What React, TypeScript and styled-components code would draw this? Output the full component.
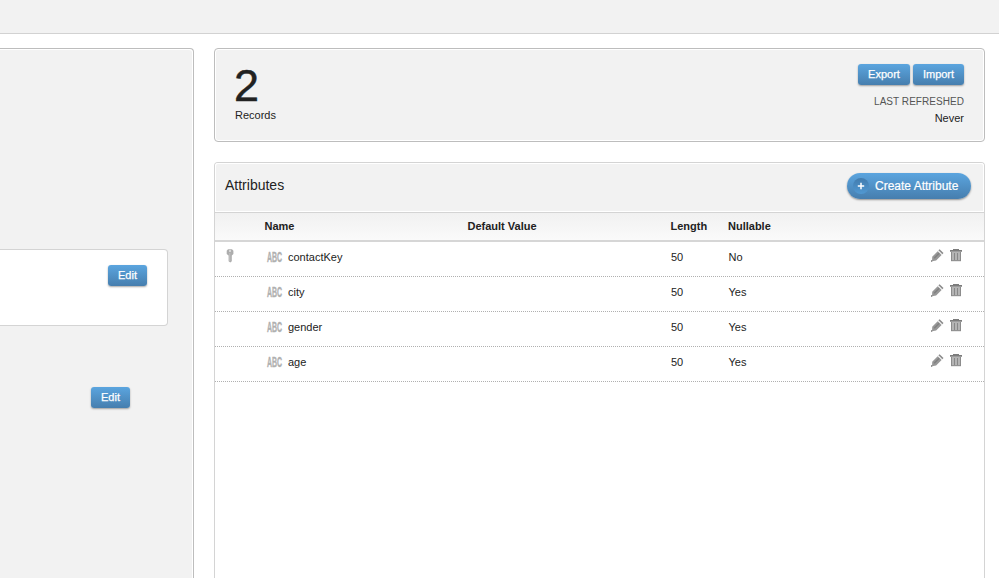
import React from "react";
import styled, { createGlobalStyle } from "styled-components";

const GlobalStyle = createGlobalStyle`
  * { box-sizing: border-box; }
  body {
    margin: 0;
    background: #fff;
    color: #222;
    font-family: "Liberation Sans", Arial, sans-serif;
    font-size: 11px;
    overflow: hidden;
  }
`;

const Page = styled.div`
  height: 578px;
  display: flex;
  flex-direction: column;
  overflow: hidden;
`;

const TopBar = styled.header`
  flex: none;
  height: 34px;
  background: #f2f2f2;
  border-bottom: 1px solid #d2d2d2;
`;

const Columns = styled.div`
  flex: 1;
  display: flex;
  gap: 20px;
  padding: 14px 14px 0 0;
  min-height: 0;
`;

const Sidebar = styled.aside`
  width: 194px;
  background: #f2f2f2;
  border: 1px solid #bdbdbd;
  border-width: 1px 1px 0 0;
  border-top-right-radius: 4px;
  box-shadow: inset -1px 1px 0 #fff;
  padding-top: 200px;
`;

const SideCard = styled.section`
  width: 168px;
  height: 77px;
  display: flex;
  justify-content: flex-end;
  align-items: flex-start;
  padding: 15px 20px 0 0;
  background: #fff;
  border: 1px solid #d4d4d4;
  border-left: 0;
  border-radius: 0 4px 4px 0;
`;

const SideAction = styled.div`
  width: 130px;
  display: flex;
  justify-content: flex-end;
  padding-top: 61px;
`;

const Button = styled.button<{ $width: number }>`
  width: ${(p) => p.$width}px;
  height: 21px;
  padding: 0 0 1px;
  border: 0;
  border-radius: 3px;
  background: linear-gradient(#5ba5df, #467eae);
  box-shadow: 0 1px 2px rgba(0, 0, 0, 0.35);
  color: #fff;
  font: 11px/20px "Liberation Sans", Arial, sans-serif;
  -webkit-text-stroke: 0.25px #fff;
`;

const Main = styled.main`
  flex: 1;
  display: flex;
  flex-direction: column;
  gap: 20px;
  min-height: 0;
`;

const Summary = styled.section`
  flex: none;
  height: 94px;
  display: flex;
  justify-content: space-between;
  padding: 15px 20px 0;
  background: #f2f2f2;
  border: 1px solid #bdbdbd;
  border-radius: 4px;
  box-shadow: inset 0 0 0 1px #fff;
`;

const Count = styled.div`
  height: 44px;
  font-size: 45px;
  line-height: 44px;
  margin-left: -1px;
  -webkit-text-stroke: 0.5px #222;
`;

const Label = styled.div`
  line-height: 14px;
`;

const Refresh = styled.div`
  display: flex;
  flex-direction: column;
  align-items: flex-end;
`;

const ButtonRow = styled.div`
  display: flex;
  gap: 3px;
  margin-bottom: 10px;
`;

const RefreshTitle = styled.div`
  color: #555;
  font-size: 10px;
  line-height: 13px;
  letter-spacing: 0.05px;
  margin-bottom: 3px;
`;

const Panel = styled.section`
  flex: 1;
  min-height: 0;
  border: 1px solid #d4d4d4;
  border-bottom: 0;
  border-radius: 4px 4px 0 0;
`;

const PanelHead = styled.div`
  height: 49px;
  display: flex;
  align-items: flex-start;
  justify-content: space-between;
  padding: 10px 13px 0 10px;
  border-radius: 3px 3px 0 0;
  background: #f2f2f2;
  box-shadow: inset 0 0 0 1px #fff;
`;

const Title = styled.h2`
  margin: 0;
  padding-top: 4px;
  font-size: 14px;
  line-height: 17px;
  font-weight: 400;
`;

const CreateButton = styled.button`
  width: 124px;
  height: 26px;
  display: flex;
  align-items: center;
  gap: 6px;
  padding: 0 0 0 6px;
  border: 0;
  border-radius: 13px;
  background: linear-gradient(#5ba5df, #467eae);
  box-shadow: 0 1px 2px rgba(0, 0, 0, 0.4);
  color: #fff;
  font: 12px/24px "Liberation Sans", Arial, sans-serif;
  white-space: nowrap;
  -webkit-text-stroke: 0.2px #fff;
`;

const Row = styled.div`
  display: grid;
  grid-template-columns: 40px 203px 203px 57.5px 54.5px 1fr 33px 20px;
  height: 35px;
  align-items: center;
  padding-left: 10px;
  border-bottom: 1px dotted #b0b0b0;
`;

const HeadRow = styled(Row)`
  grid-template-columns: 39.5px 203px 203px 57.5px 54px 1fr 33px 20px;
  height: 30px;
  padding-bottom: 2px;
  border-top: 1px solid #d4d4d4;
  border-bottom: 2px solid #d6d6d6;
  background: linear-gradient(#f1f1f1, #fafafa);
  font-weight: 700;
`;

const Cell = styled.div`
  line-height: 14px;
  padding-bottom: 4px;
`;

const NameCell = styled.div`
  display: flex;
  align-items: center;
  gap: 6px;
  padding: 0 0 4px 2px;
  line-height: 14px;
`;

const Icons = styled.div`
  display: flex;
  align-items: center;
  gap: 6px;
  padding-bottom: 7px;
`;

const KeyHolder = styled.div`
  height: 14px;
  margin: 0 0 6px 1px;
`;

const TypeBox = styled.span`
  flex: none;
  width: 15px;
  height: 14px;
`;

/* Condensed capitals: a wide line scaled down to the icon's width. */
const TypeText = styled.span`
  display: block;
  width: 32px;
  color: #b0b0b0;
  font-size: 14.5px;
  font-weight: 700;
  line-height: 15px;
  -webkit-text-stroke: 0.4px #b0b0b0;
  transform: scaleX(0.48);
  transform-origin: 0 50%;
`;

const Glyph = styled.svg`
  display: block;
  flex: none;
`;

const PlusIcon = () => (
  <Glyph width="16" height="16" viewBox="0 0 16 16">
    <defs>
      <linearGradient id="well" x2="0" y2="1">
        <stop stopColor="#427cae" />
        <stop offset="1" stopColor="#5098d2" />
      </linearGradient>
    </defs>
    <circle cx="8" cy="8" r="8" fill="url(#well)" />
    <path d="M8 4.8v6.4M4.8 8h6.4" stroke="#fff" strokeWidth="1.5" />
  </Glyph>
);

const KeyIcon = () => (
  <Glyph width="8" height="14" viewBox="0 0 8 14">
    <path
      fillRule="evenodd"
      fill="#adadad"
      d="M2 .2h4L7.4 1.7v3.2L5.8 6.6v5.6L4.3 13.4l-1.7-1.2V6.6L.7 4.9V1.7zM3 1.4v1h2v-1z"
    />
    <path d="M3.8 4v8" stroke="#c6c6c6" strokeWidth=".8" />
  </Glyph>
);

const TextTypeIcon = () => (
  <TypeBox>
    <TypeText>ABC</TypeText>
  </TypeBox>
);

const PencilIcon = () => (
  <Glyph width="13" height="13" viewBox="0 0 13 13">
    <path d="M1.2 7.8 6.7 2.2l3.9 3.9-5.5 5.5-4 .7z" fill="#989898" />
    <path d="M3.2 9.2 8.2 4.2" stroke="#808080" strokeWidth="1.5" />
    <path d="M7.4 1.3 8.6.2l3.9 3.9-1.2 1.2z" fill="#8c8c8c" />
    <path d="m7.1 1.8 4 4" stroke="#ddd" strokeWidth=".6" />
    <path d="M0 11.4h1.2v1.2H0z" fill="#333" />
  </Glyph>
);

const TrashIcon = () => (
  <Glyph width="12" height="13" viewBox="0 0 12 13">
    <path d="M3 0h6v1h3v1.8H0V1h3z" fill="#7c7c7c" />
    <path d="M1 3h10v9H1z" fill="#b4b4b4" />
    <path d="M1.5 3v9M10.5 3v9" stroke="#8c8c8c" />
    <path d="M4.5 4v7M7.5 4v7" stroke="#888" />
    <path d="M1 11.7h10" stroke="#8c8c8c" />
  </Glyph>
);

const attributes = [
  { name: "contactKey", length: 50, nullable: "No", key: true },
  { name: "city", length: 50, nullable: "Yes", key: false },
  { name: "gender", length: 50, nullable: "Yes", key: false },
  { name: "age", length: 50, nullable: "Yes", key: false },
];

export default function App() {
  return (
    <>
      <GlobalStyle />
      <Page>
        <TopBar />
        <Columns>
          <Sidebar>
            <SideCard>
              <Button $width={39}>Edit</Button>
            </SideCard>
            <SideAction>
              <Button $width={39}>Edit</Button>
            </SideAction>
          </Sidebar>
          <Main>
            <Summary>
              <div>
                <Count>2</Count>
                <Label>Records</Label>
              </div>
              <Refresh>
                <ButtonRow>
                  <Button $width={52}>Export</Button>
                  <Button $width={51}>Import</Button>
                </ButtonRow>
                <RefreshTitle>LAST REFRESHED</RefreshTitle>
                <Label>Never</Label>
              </Refresh>
            </Summary>
            <Panel>
              <PanelHead>
                <Title>Attributes</Title>
                <CreateButton>
                  <PlusIcon />
                  Create Attribute
                </CreateButton>
              </PanelHead>
              <HeadRow>
                <span />
                <span>Name</span>
                <span>Default Value</span>
                <span>Length</span>
                <span>Nullable</span>
              </HeadRow>
              {attributes.map((a) => (
                <Row key={a.name}>
                  <KeyHolder>{a.key && <KeyIcon />}</KeyHolder>
                  <NameCell>
                    <TextTypeIcon />
                    {a.name}
                  </NameCell>
                  <span />
                  <Cell>{a.length}</Cell>
                  <Cell>{a.nullable}</Cell>
                  <span />
                  <Icons>
                    <PencilIcon />
                    <TrashIcon />
                  </Icons>
                </Row>
              ))}
            </Panel>
          </Main>
        </Columns>
      </Page>
    </>
  );
}
